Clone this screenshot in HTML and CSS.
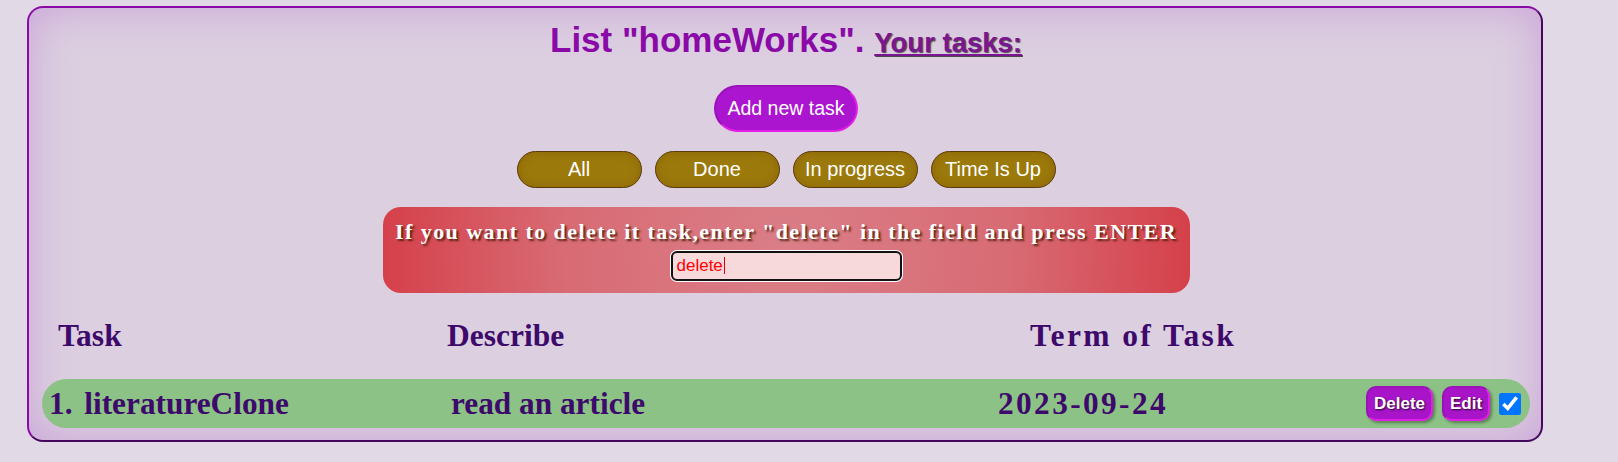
FILE: index.html
```html
<!DOCTYPE html>
<html lang="en">
<head>
<meta charset="utf-8">
<title>homeWorks</title>
<link rel="stylesheet" href="styles.css">
</head>
<body>
<div class="app">
  <h1 class="title">List "homeWorks". <span class="sub">Your tasks:</span></h1>
  <button class="add-btn">Add new task</button>
  <div class="filters">
    <button class="filter">All</button>
    <button class="filter">Done</button>
    <button class="filter">In progress</button>
    <button class="filter">Time Is Up</button>
  </div>
  <div class="modal">
    <p class="modal-text">If you want to delete it task,enter "delete" in the field and press ENTER</p>
    <div class="input-wrap">
      <input class="modal-input" type="text" value="delete">
      <span class="caret"></span>
    </div>
  </div>
  <div class="list-head">
    <span class="col-task">Task</span>
    <span class="col-desc">Describe</span>
    <span class="col-term">Term of Task</span>
  </div>
  <div class="task-row">
    <span class="task-name"><span class="task-num">1.</span> literatureClone</span>
    <span class="task-desc">read an article</span>
    <span class="task-term">2023-09-24</span>
    <div class="actions">
      <button class="act act-delete">Delete</button>
      <button class="act act-edit">Edit</button>
      <input class="done-box" type="checkbox" checked>
    </div>
  </div>
</div>
</body>
</html>
```
FILE: styles.css
```css
html, body {
  margin: 0;
  padding: 0;
}
body {
  background: #e2d9e6;
  font-family: "Liberation Sans", Arial, sans-serif;
  width: 1618px;
  height: 462px;
  overflow: hidden;
}
.app {
  box-sizing: border-box;
  margin: 6px 0 0 27px;
  width: 1516px;
  height: 436px;
  border: 2px solid;
  border-color: #8a0aa8 #45085f #45085f #8a0aa8;
  border-radius: 16px;
  background: #dccfe0;
  box-shadow: inset 0 0 45px #caa3d8;
  padding: 0 11px 0 13px;
  display: flex;
  flex-direction: column;
  align-items: center;
}
.title {
  margin: 12px 0 0;
  font-size: 35px;
  line-height: 40px;
  font-weight: bold;
  color: #8a0aa8;
  white-space: nowrap;
}
.sub {
  font-size: 27.5px;
  line-height: 1;
  color: #7a1690;
  text-decoration: underline;
  text-decoration-thickness: 2px;
  text-underline-offset: 2px;
  text-shadow: 1px 1px 1px #4a4a4a;
}
.add-btn {
  margin-top: 25px;
  box-sizing: border-box;
  width: 144px;
  height: 47px;
  border-radius: 24px;
  border: 2px solid;
  border-color: #9a12b8 #e520e6 #e520e6 #9a12b8;
  background: #ac15cf;
  color: #fff;
  font-family: "Liberation Sans", Arial, sans-serif;
  font-size: 19.5px;
  padding: 0;
}
.filters {
  margin-top: 19px;
  display: flex;
  gap: 13px;
}
.filter {
  box-sizing: border-box;
  width: 125px;
  height: 37px;
  border-radius: 19px;
  border: 1px solid #5b3a0b;
  background: #9b790b;
  box-shadow: inset 0 0 8px rgba(130, 85, 0, 0.55);
  color: #fff;
  font-family: "Liberation Sans", Arial, sans-serif;
  font-size: 20px;
  padding: 0;
}
.modal {
  margin-top: 19px;
  box-sizing: border-box;
  width: 807px;
  height: 86px;
  border-radius: 18px;
  background: radial-gradient(circle, #da7e87 0%, #d86b74 55%, #d5404a 100%);
  padding-top: 12px;
  display: flex;
  flex-direction: column;
  align-items: center;
}
.modal-text {
  margin: 0;
  font-family: "Liberation Serif", "Times New Roman", serif;
  font-weight: bold;
  font-size: 22px;
  line-height: 26px;
  letter-spacing: 1.45px;
  color: #fff;
  text-shadow: 2px 2px 2px rgba(70, 25, 0, 0.85);
  white-space: nowrap;
}
.input-wrap {
  position: relative;
  margin-top: 6px;
  width: 231px;
  height: 30px;
}
.modal-input {
  display: block;
  margin: 0;
  box-sizing: border-box;
  width: 231px;
  height: 30px;
  border: 2px solid #111;
  border-radius: 6px;
  box-shadow: 0 0 0 1px #fff;
  background: #f7d9dc;
  color: #ff0000;
  font-family: "Liberation Sans", Arial, sans-serif;
  font-size: 17px;
  padding: 0 0 0 4px;
  outline: none;
}
.caret {
  position: absolute;
  left: 53px;
  top: 6px;
  width: 1.5px;
  height: 17px;
  background: #e00000;
}
.list-head {
  align-self: stretch;
  margin-top: 26px;
  padding-left: 16px;
  display: flex;
  font-family: "Liberation Serif", "Times New Roman", serif;
  font-weight: bold;
  font-size: 31.5px;
  line-height: 34px;
  color: #3d0a6b;
  white-space: nowrap;
}
.col-task { width: 389px; }
.col-desc { width: 583px; }
.col-term { letter-spacing: 2.4px; }
.task-row {
  align-self: stretch;
  margin-top: 26px;
  height: 49px;
  border-radius: 25px;
  background: #8cc286;
  padding: 0 9px 0 7px;
  display: flex;
  align-items: center;
  font-family: "Liberation Serif", "Times New Roman", serif;
  font-weight: bold;
  font-size: 31.3px;
  line-height: 49px;
  color: #3d0a6b;
  white-space: nowrap;
}
.task-num { margin-right: 4px; }
.task-name { width: 402px; }
.task-desc { width: 547px; }
.task-term { letter-spacing: 2.4px; }
.actions {
  margin-left: auto;
  display: flex;
  align-items: center;
  gap: 9px;
}
.act {
  box-sizing: border-box;
  height: 35px;
  border-radius: 10px;
  border: 2px solid;
  border-color: #9a12b8 #e520e6 #e520e6 #9a12b8;
  background: #a815c9;
  box-shadow: 2px 2px 3px rgba(0, 0, 0, 0.35);
  color: #fff;
  font-family: "Liberation Sans", Arial, sans-serif;
  font-weight: bold;
  font-size: 17px;
  text-shadow: 1px 1px 2px rgba(0, 0, 0, 0.8);
  padding: 0;
}
.act-delete { width: 67px; }
.act-edit { width: 48px; }
.done-box {
  margin: 0;
  width: 22px;
  height: 22px;
  accent-color: #0075ff;
}
```
